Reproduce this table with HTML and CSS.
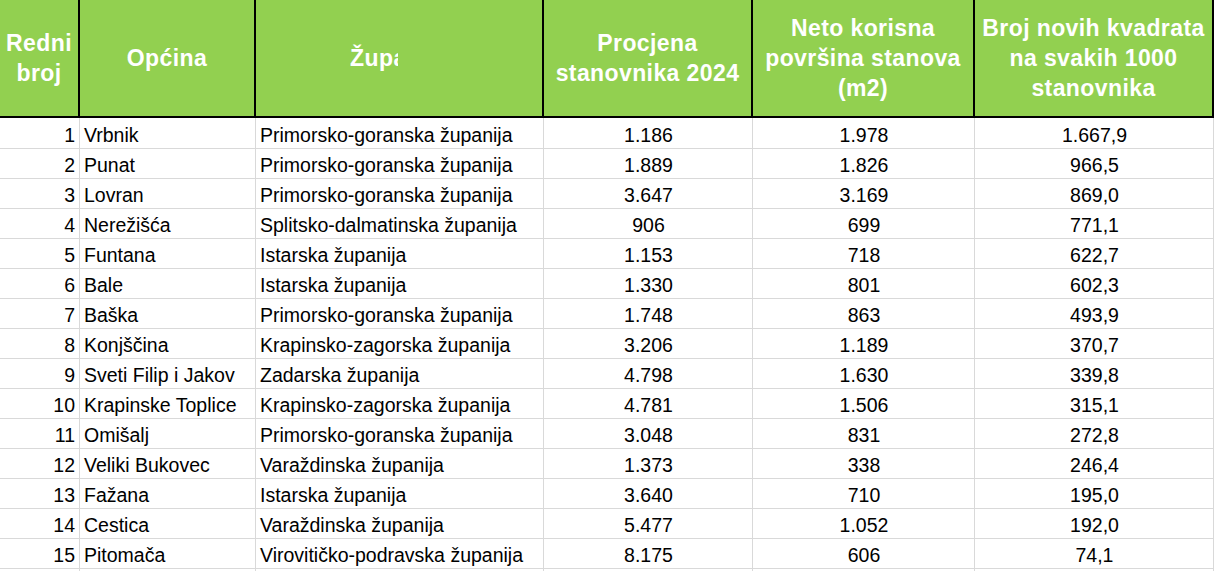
FILE: index.html
```html
<!DOCTYPE html>
<html lang="hr">
<head>
<meta charset="utf-8">
<title>Broj novih kvadrata</title>
<link rel="stylesheet" href="styles.css">
</head>
<body>
<table class="sheet">
  <colgroup>
    <col class="c-rb">
    <col class="c-op">
    <col class="c-zu">
    <col class="c-pr">
    <col class="c-ne">
    <col class="c-br">
  </colgroup>
  <thead>
    <tr>
      <th>Redni<br>broj</th>
      <th>Općina</th>
      <th><span class="clipped">Županija</span></th>
      <th>Procjena<br>stanovnika 2024</th>
      <th>Neto korisna<br>površina stanova<br>(m2)</th>
      <th>Broj novih kvadrata<br>na svakih 1000<br>stanovnika</th>
    </tr>
  </thead>
  <tbody>
    <tr class="first"><td class="num">1</td><td>Vrbnik</td><td>Primorsko-goranska županija</td><td class="mid">1.186</td><td class="mid">1.978</td><td class="mid">1.667,9</td></tr>
    <tr><td class="num">2</td><td>Punat</td><td>Primorsko-goranska županija</td><td class="mid">1.889</td><td class="mid">1.826</td><td class="mid">966,5</td></tr>
    <tr><td class="num">3</td><td>Lovran</td><td>Primorsko-goranska županija</td><td class="mid">3.647</td><td class="mid">3.169</td><td class="mid">869,0</td></tr>
    <tr><td class="num">4</td><td>Nerežišća</td><td>Splitsko-dalmatinska županija</td><td class="mid">906</td><td class="mid">699</td><td class="mid">771,1</td></tr>
    <tr><td class="num">5</td><td>Funtana</td><td>Istarska županija</td><td class="mid">1.153</td><td class="mid">718</td><td class="mid">622,7</td></tr>
    <tr><td class="num">6</td><td>Bale</td><td>Istarska županija</td><td class="mid">1.330</td><td class="mid">801</td><td class="mid">602,3</td></tr>
    <tr><td class="num">7</td><td>Baška</td><td>Primorsko-goranska županija</td><td class="mid">1.748</td><td class="mid">863</td><td class="mid">493,9</td></tr>
    <tr><td class="num">8</td><td>Konjščina</td><td>Krapinsko-zagorska županija</td><td class="mid">3.206</td><td class="mid">1.189</td><td class="mid">370,7</td></tr>
    <tr><td class="num">9</td><td>Sveti Filip i Jakov</td><td>Zadarska županija</td><td class="mid">4.798</td><td class="mid">1.630</td><td class="mid">339,8</td></tr>
    <tr><td class="num">10</td><td>Krapinske Toplice</td><td>Krapinsko-zagorska županija</td><td class="mid">4.781</td><td class="mid">1.506</td><td class="mid">315,1</td></tr>
    <tr><td class="num">11</td><td>Omišalj</td><td>Primorsko-goranska županija</td><td class="mid">3.048</td><td class="mid">831</td><td class="mid">272,8</td></tr>
    <tr><td class="num">12</td><td>Veliki Bukovec</td><td>Varaždinska županija</td><td class="mid">1.373</td><td class="mid">338</td><td class="mid">246,4</td></tr>
    <tr><td class="num">13</td><td>Fažana</td><td>Istarska županija</td><td class="mid">3.640</td><td class="mid">710</td><td class="mid">195,0</td></tr>
    <tr><td class="num">14</td><td>Cestica</td><td>Varaždinska županija</td><td class="mid">5.477</td><td class="mid">1.052</td><td class="mid">192,0</td></tr>
    <tr><td class="num">15</td><td>Pitomača</td><td>Virovitičko-podravska županija</td><td class="mid">8.175</td><td class="mid">606</td><td class="mid">74,1</td></tr>
    <tr><td class="num"></td><td></td><td></td><td class="mid"></td><td class="mid"></td><td class="mid"></td></tr>
  </tbody>
</table>
</body>
</html>
```

FILE: styles.css
```css
html, body {
  margin: 0;
  padding: 0;
  background: #ffffff;
  overflow: hidden;
}

body {
  width: 1214px;
  height: 571px;
  font-family: "Liberation Sans", Arial, sans-serif;
  color: #000000;
}

.sheet {
  border-collapse: separate;
  border-spacing: 0;
  table-layout: fixed;
  width: 1214px;
}

.c-rb { width: 80px; }
.c-op { width: 176px; }
.c-zu { width: 288px; }
.c-pr { width: 209px; }
.c-ne { width: 222px; }
.c-br { width: 239px; }

.sheet th,
.sheet td {
  box-sizing: border-box;
  padding: 0;
  white-space: nowrap;
  overflow: hidden;
}

.sheet th {
  height: 118px;
  background: #92d050;
  color: #ffffff;
  font-weight: bold;
  font-size: 23px;
  letter-spacing: 0.4px;
  line-height: 30px;
  text-align: center;
  vertical-align: middle;
  border-right: 2px solid #000000;
  border-bottom: 2px solid #000000;
}

.clipped {
  display: inline-block;
  clip-path: inset(0 51% 0 0);
}

.sheet td {
  height: 30px;
  font-size: 19.5px;
  line-height: 22px;
  vertical-align: bottom;
  padding: 0 3px 2px 4px;
  border-right: 1px solid #d9d9d9;
  border-bottom: 1px solid #d9d9d9;
  text-align: left;
}

.sheet tr.first td {
  height: 31px;
}

.sheet td.num {
  text-align: right;
  padding-right: 4px;
}

.sheet td.mid {
  text-align: center;
}
```
